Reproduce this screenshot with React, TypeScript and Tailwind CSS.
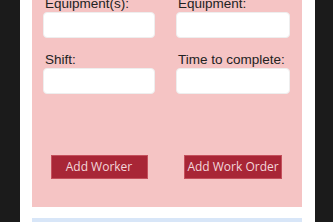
import React from 'react';

function Field({ label }: { label: string }) {
    return (
        <div className="flex flex-col">
            <span className="pl-[2px] text-[13.5px] leading-[17px] text-[#222]">{label}</span>
            <input type="text" className="h-[26px] w-full rounded-[4px] border border-[#eee] bg-white" />
        </div>
    );
}

export default function App() {
    return (
        <div className="flex h-[222px] w-[333px] overflow-hidden bg-[#1b1b1b] font-['Liberation_Sans',sans-serif]">
            <div className="w-[20px] shrink-0" />
            <div className="flex w-[295px] shrink-0 flex-col bg-white pl-[12px] pr-[13px]">
                <div className="flex h-[207px] shrink-0 flex-col bg-[#f5c4c4] px-[11px]">
                    <div className="-mt-[5px] grid grid-cols-[112px_114px] gap-x-[21px] gap-y-[13px]">
                        <Field label="Equipment(s):" />
                        <Field label="Equipment:" />
                        <Field label="Shift:" />
                        <Field label="Time to complete:" />
                    </div>
                    <div className="mt-[61px] grid grid-cols-[112px_114px] gap-x-[21px]">
                        <div className="flex justify-center">
                            <button className="h-[24px] w-[97px] border border-[#c4505c] bg-[#a82636] font-['Open_Sans',sans-serif] text-[12px] text-[#f3d7db]">
                                Add Worker
                            </button>
                        </div>
                        <div className="flex justify-center">
                            <button className="h-[24px] w-[98px] border border-[#c4505c] bg-[#a82636] font-['Open_Sans',sans-serif] text-[12px] text-[#f3d7db]">
                                Add Work Order
                            </button>
                        </div>
                    </div>
                </div>
                <div className="mt-[11px] h-[20px] bg-[#d8e6f8]" />
            </div>
        </div>
    );
}
